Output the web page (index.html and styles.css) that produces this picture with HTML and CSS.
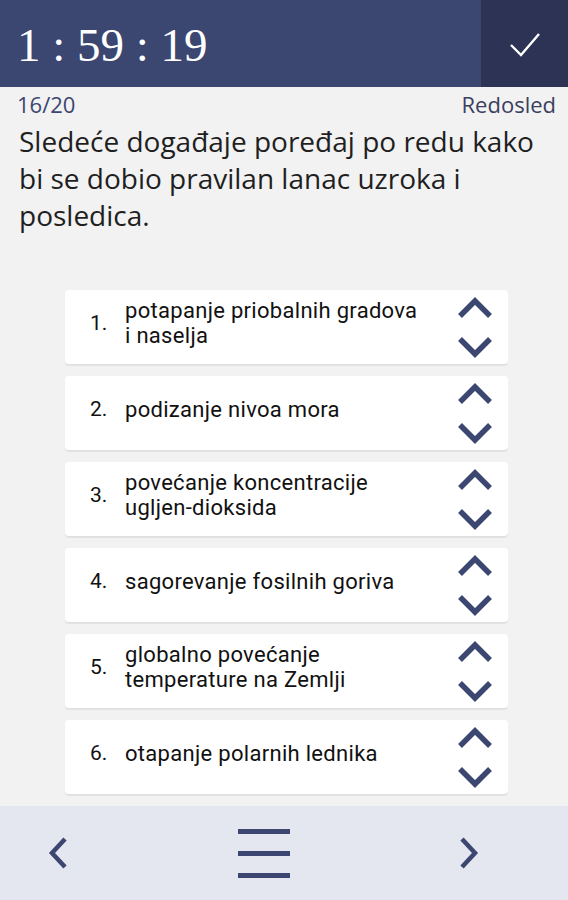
FILE: index.html
```html
<!DOCTYPE html>
<html lang="sr">
<head>
    <meta charset="UTF-8">
    <meta name="viewport" content="width=device-width, initial-scale=1.0">
    <title>Redosled</title>
    <link rel="stylesheet" href="styles.css">
</head>
<body>

<div class="app">
    <header class="top-bar">
        <div class="timer">1 : 59 : 19</div>
        <button class="btn-finish">
            <svg width="34" height="34" viewBox="0 0 34 34">
                <path d="M3 18 L13 28 L31 7" fill="none" stroke="#ffffff" stroke-width="2.4"/>
            </svg>
        </button>
    </header>

    <main class="content">
        <div class="meta">
            <span class="counter">16/20</span>
            <span class="type">Redosled</span>
        </div>
        <p class="question">Sledeće događaje poređaj po redu kako bi se dobio pravilan lanac uzroka i posledica.</p>

        <ul class="order-list" id="order-list"></ul>
    </main>

    <footer class="bottom-bar">
        <button class="nav-btn">
            <svg width="22" height="34" viewBox="0 0 22 34">
                <path d="M17 3 L4 17 L17 31" fill="none" stroke="#3b4671" stroke-width="4.5"/>
            </svg>
        </button>
        <button class="nav-btn">
            <svg width="56" height="52" viewBox="0 0 56 52">
                <rect x="2" y="2" width="52" height="5" fill="#3b4671"/>
                <rect x="2" y="24" width="52" height="5" fill="#3b4671"/>
                <rect x="2" y="46" width="52" height="5" fill="#3b4671"/>
            </svg>
        </button>
        <button class="nav-btn">
            <svg width="22" height="34" viewBox="0 0 22 34">
                <path d="M4 3 L17 17 L4 31" fill="none" stroke="#3b4671" stroke-width="4.5"/>
            </svg>
        </button>
    </footer>
</div>

<script>
    let items = [
        "potapanje priobalnih gradova i naselja",
        "podizanje nivoa mora",
        "povećanje koncentracije ugljen-dioksida",
        "sagorevanje fosilnih goriva",
        "globalno povećanje temperature na Zemlji",
        "otapanje polarnih lednika"
    ];

    function showList() {
        let text = "";
        items.forEach((item, index) => {
            text += "<li class='order-item'>";
            text += "<span class='num'>" + (index + 1) + ".</span>";
            text += "<span class='label'>" + item + "</span>";
            text += "<span class='arrows'>";
            text += `<svg onclick="moveItem(${index}, -1)" width="36" height="24" viewBox="0 0 36 24"><path d="M3 19 L18 4 L33 19" fill="none" stroke="#3b4671" stroke-width="5.5"/></svg>`;
            text += `<svg onclick="moveItem(${index}, 1)" width="36" height="24" viewBox="0 0 36 24"><path d="M3 5 L18 20 L33 5" fill="none" stroke="#3b4671" stroke-width="5.5"/></svg>`;
            text += "</span>";
            text += "</li>";
        });
        document.getElementById("order-list").innerHTML = text;
    }

    function moveItem(index, dir) {
        let target = index + dir;
        if (target < 0 || target >= items.length) return;
        let tmp = items[index];
        items[index] = items[target];
        items[target] = tmp;
        showList();
    }

    showList();
</script>

</body>
</html>
```

FILE: styles.css
```css
body {
    margin: 0;
    padding: 0;
    background-color: #f2f2f2;
    font-family: "Open Sans", sans-serif;
}

.app {
    height: 900px;
    display: flex;
    flex-direction: column;
}

button {
    border: none;
    background: none;
    padding: 0;
    cursor: pointer;
}

.top-bar {
    height: 87px;
    background-color: #3b4671;
    display: flex;
    align-items: center;
    justify-content: space-between;
}

.timer {
    font-family: "Liberation Serif", serif;
    font-size: 47px;
    color: #ffffff;
    padding-left: 17px;
    padding-top: 2px;
}

.btn-finish {
    width: 87px;
    height: 87px;
    background-color: #2c3354;
    display: flex;
    align-items: center;
    justify-content: center;
}

.content {
    flex: 1;
}

.meta {
    display: flex;
    justify-content: space-between;
    padding: 4px 12px 0 17px;
    font-size: 22px;
    line-height: 26px;
    color: #3b4671;
}

.meta .type {
    color: #3a405e;
}

.question {
    margin: 6px 0 0 19px;
    width: 520px;
    font-size: 28px;
    line-height: 37px;
    color: #1f1f1f;
}

.order-list {
    list-style: none;
    margin: 56px 60px 0 65px;
    padding: 0;
    display: flex;
    flex-direction: column;
    gap: 12px;
}

.order-item {
    height: 74px;
    background-color: #ffffff;
    border-radius: 4px;
    box-shadow: 0 2px 1px rgba(0, 0, 0, 0.07);
    display: flex;
    align-items: center;
    font-family: Roboto, sans-serif;
    font-size: 22px;
    line-height: 25px;
    letter-spacing: 0.3px;
    color: #111111;
}

.num {
    width: 35px;
    padding-left: 25px;
    padding-bottom: 8px;
    font-size: 21px;
    letter-spacing: 0;
    flex-shrink: 0;
}

.label {
    flex: 1;
    padding-right: 14px;
    padding-bottom: 8px;
}

.arrows {
    width: 66px;
    display: flex;
    flex-direction: column;
    align-items: center;
    gap: 13px;
}

.arrows svg {
    cursor: pointer;
}

.bottom-bar {
    height: 94px;
    background-color: #e4e7ef;
    display: flex;
    align-items: center;
    justify-content: space-between;
    padding: 0 88px 0 48px;
}

.nav-btn {
    display: flex;
    align-items: center;
}
```
